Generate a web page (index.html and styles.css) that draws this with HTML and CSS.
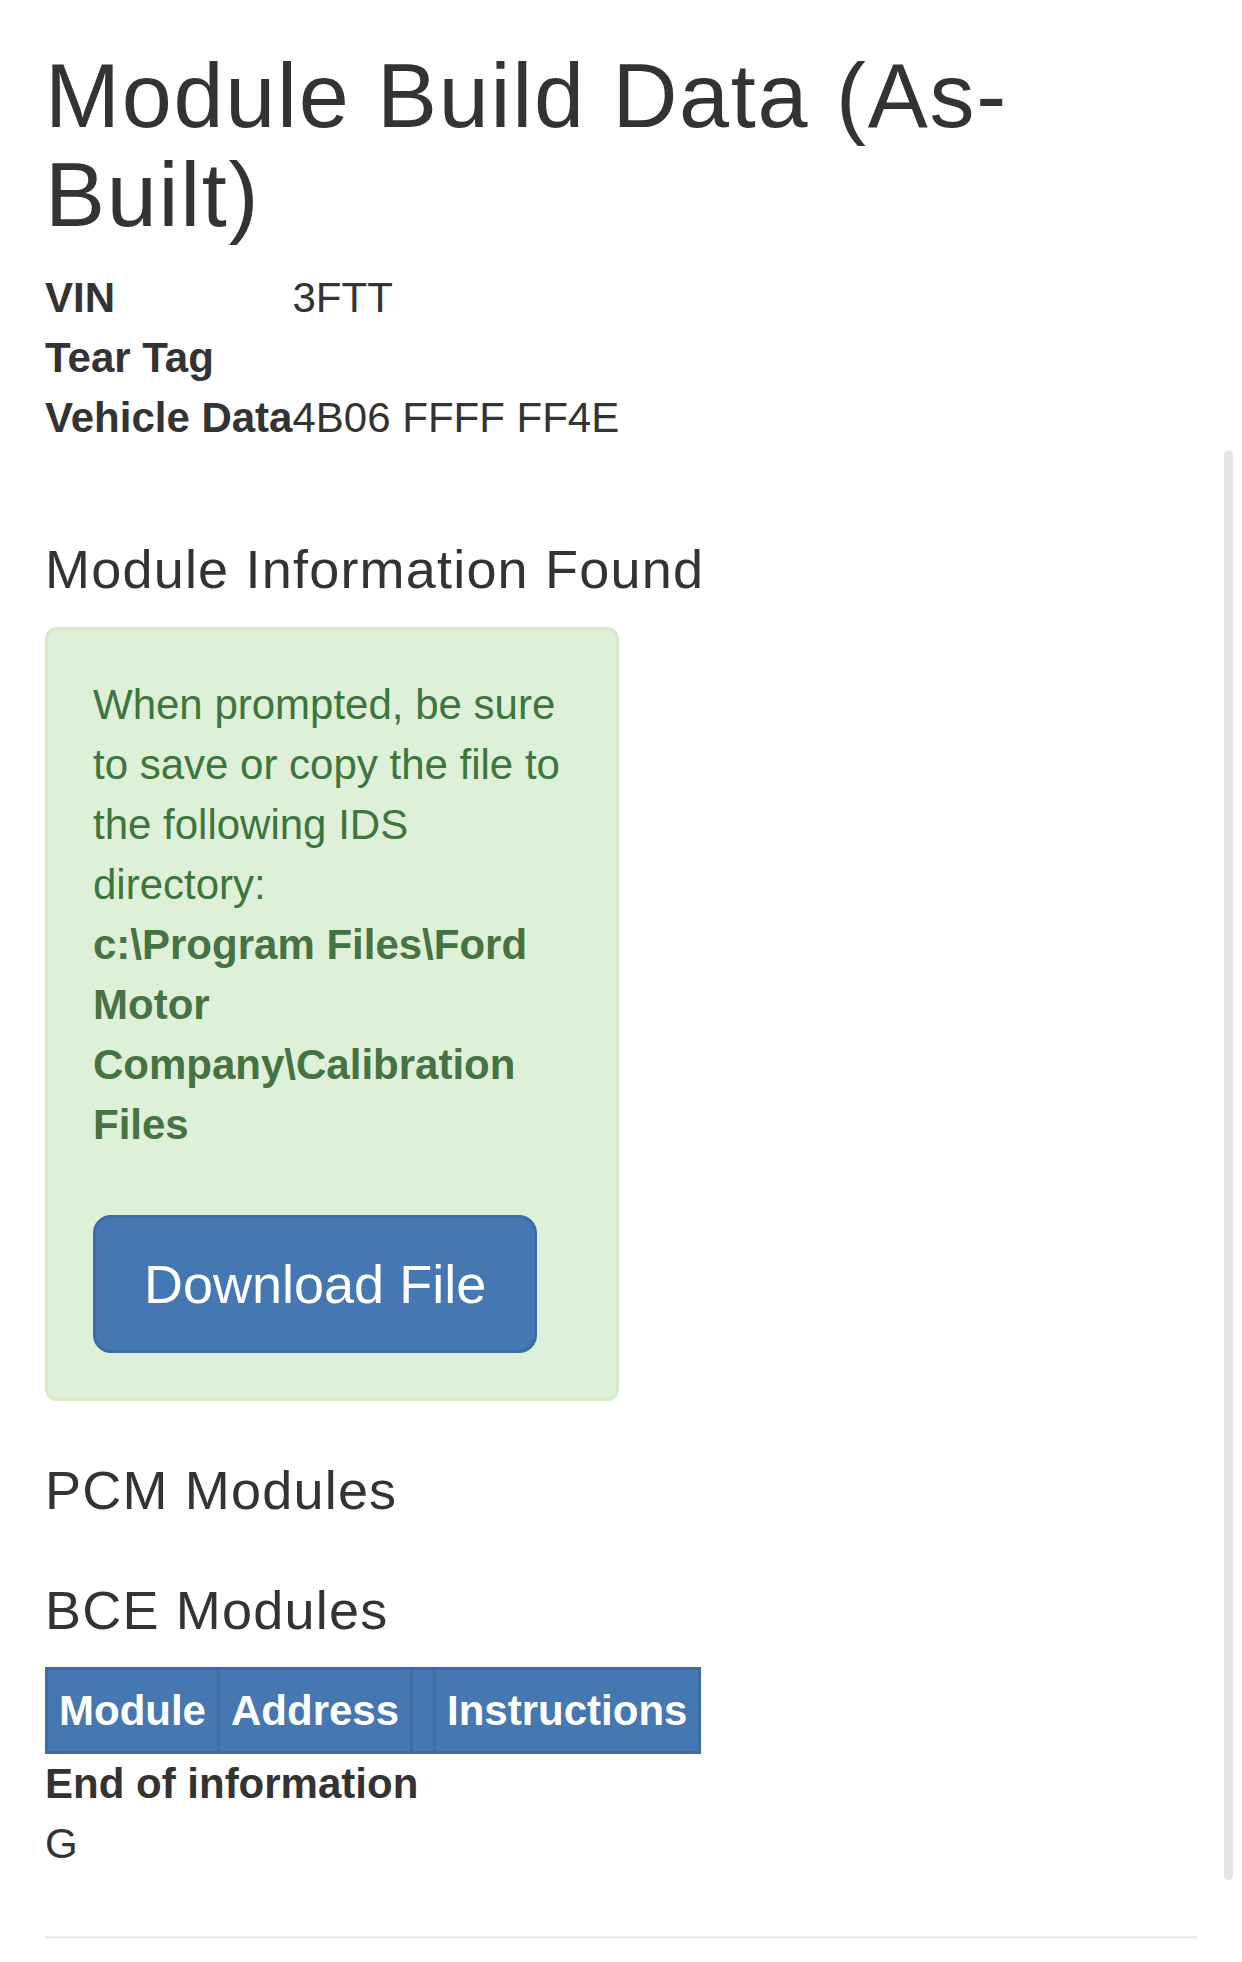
FILE: index.html
```html
<!DOCTYPE html>
<html lang="en">
<head>
<meta charset="utf-8">
<title>Module Build Data (As-Built)</title>
<link rel="stylesheet" href="styles.css">
</head>
<body>
<div class="page">
  <h2 class="title">Module Build Data (As-Built)</h2>
  <table class="vehicle">
    <tr><th>VIN</th><td>3FTT</td></tr>
    <tr><th>Tear Tag</th><td></td></tr>
    <tr><th>Vehicle Data</th><td>4B06 FFFF FF4E</td></tr>
  </table>

  <h4 class="section first">Module Information Found</h4>
  <div class="alert">
    <div class="alert-text">When prompted, be sure to save or copy the file to the following IDS directory:<br><strong>c:\Program Files\Ford Motor Company\Calibration Files</strong></div>
    <div class="alert-actions"><a class="btn" href="#">Download File</a></div>
  </div>

  <h4 class="section pcm">PCM Modules</h4>
  <h4 class="section bce">BCE Modules</h4>
  <table class="modules">
    <thead>
      <tr><th>Module</th><th>Address</th><th class="narrow"></th><th>Instructions</th></tr>
    </thead>
  </table>
  <div class="end"><strong>End of information</strong></div>
  <div class="mark">G</div>
  <hr class="rule">
</div>
<div class="scrollbar"></div>
</body>
</html>
```
FILE: styles.css
```css
html, body {
  margin: 0;
  padding: 0;
  background: #fff;
}
body {
  font-family: "Liberation Sans", Arial, Helvetica, sans-serif;
  font-size: 42px;
  line-height: 60px;
  color: #333;
}
.page {
  padding: 0 45px;
}
.title {
  max-width: 1040px;
  font-size: 90px;
  line-height: 99px;
  letter-spacing: 1.7px;
  font-weight: normal;
  margin: 47px 0 23px;
  color: #333;
}
.vehicle {
  border-collapse: collapse;
  border-spacing: 0;
  margin: 0;
}
.vehicle th, .vehicle td {
  padding: 0;
  text-align: left;
  vertical-align: top;
  height: 60px;
}
.vehicle th {
  font-weight: bold;
}
.section {
  font-size: 54px;
  line-height: 59.4px;
  letter-spacing: 1.2px;
  font-weight: normal;
  margin: 0;
  color: #333;
}
.section.first {
  margin-top: 92px;
  margin-bottom: 28px;
}
.alert {
  box-sizing: border-box;
  width: 574px;
  padding: 45px;
  border: 3px solid #d6e9c6;
  border-radius: 12px;
  background: #dff0d8;
  color: #3c763d;
}
.alert strong {
  font-weight: bold;
  color: #457341;
}
.alert-actions {
  margin-top: 60px;
}
.btn {
  display: inline-block;
  padding: 30px 48px;
  font-size: 54px;
  line-height: 72px;
  color: #fff;
  background: #4577b2;
  border: 3px solid #3c6ca4;
  border-radius: 18px;
  text-decoration: none;
}
.section.pcm {
  margin-top: 60px;
}
.section.bce {
  margin-top: 60px;
  margin-bottom: 27px;
}
.modules {
  border-collapse: collapse;
  border-spacing: 0;
  background: #4577b2;
}
.modules th {
  color: #fff;
  font-weight: bold;
  text-align: left;
  padding: 11px 11px 10px;
  border: 3px solid #3d6ca2;
  line-height: 60px;
}
.modules th.narrow {
  padding: 11px 10px 10px;
}
.end strong {
  font-weight: bold;
}
.rule {
  margin: 62px 0 0;
  border: 0;
  border-top: 3px solid #eee;
  height: 0;
}
.scrollbar {
  position: absolute;
  left: 1224px;
  top: 450px;
  width: 9px;
  height: 1430px;
  background: #e7e7e7;
  border-radius: 5px;
}
```
